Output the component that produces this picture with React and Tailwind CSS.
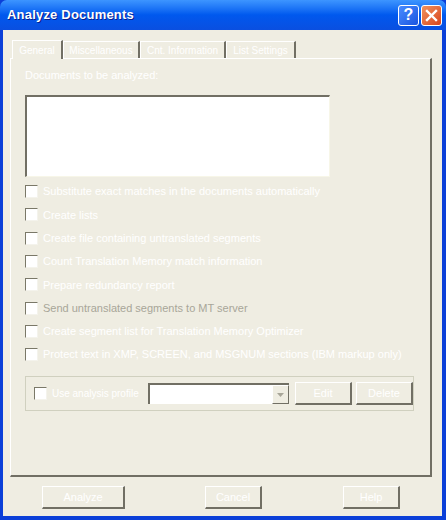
import React from "react";

const OPTIONS = [
  { label: "Substitute exact matches in the documents automatically" },
  { label: "Create lists" },
  { label: "Create file containing untranslated segments" },
  { label: "Count Translation Memory match information" },
  { label: "Prepare redundancy report" },
  { label: "Send untranslated segments to MT server", gray: true },
  { label: "Create segment list for Translation Memory Optimizer" },
  { label: "Protect text in XMP, SCREEN, and MSGNUM sections (IBM markup only)" },
];

const TABS = [
  { label: "General", w: "w-[51px]" },
  { label: "Miscellaneous", w: "w-[77px]" },
  { label: "Cnt. Information", w: "w-[86px]" },
  { label: "List Settings", w: "w-[70px]" },
];

function CheckBox() {
  return (
    <span className="w-[13px] h-[13px] shrink-0 bg-white border-t border-l border-[#7a7868] border-r border-b border-r-[#f4f3ec] border-b-[#f4f3ec]" />
  );
}

function Button({ children, className = "" }) {
  return (
    <div
      className={`h-[23px] flex items-center justify-center text-white border-t border-l border-white border-r-2 border-b-2 border-r-[#716f64] border-b-[#716f64] ${className}`}
    >
      {children}
    </div>
  );
}

export default function App() {
  return (
    <div className="w-[446px] h-[520px] bg-[#0b3fd8] flex flex-col font-['Liberation_Sans',_Arial,_sans-serif] text-[11px] select-none overflow-hidden">
      {/* title bar */}
      <div className="h-[30px] shrink-0 flex items-center px-[7px] bg-gradient-to-b from-[#3d95ff] via-[#0058ee] to-[#0a4fe0] rounded-t-[7px]">
        <span className="text-white font-bold text-[13px] tracking-[0.2px] [text-shadow:1px_1px_0_#0a1e8c]">
          Analyze Documents
        </span>
        <div className="ml-auto flex gap-[2px] mr-[-3px]">
          <div className="w-[21px] h-[21px] rounded-[3px] border border-white bg-gradient-to-br from-[#4a8cff] to-[#1a54e0] flex items-center justify-center text-white font-bold text-[16px] leading-none">
            ?
          </div>
          <div className="w-[21px] h-[21px] rounded-[3px] border border-white bg-gradient-to-br from-[#f0915c] to-[#d8421a] flex items-center justify-center">
            <svg width="13" height="13" viewBox="0 0 13 13">
              <path d="M2 2 L11 11 M11 2 L2 11" stroke="white" strokeWidth="2.4" strokeLinecap="square" />
            </svg>
          </div>
        </div>
      </div>

      {/* client */}
      <div className="flex-1 ml-[3px] mr-[4px] mb-[4px] bg-[#efede2] flex flex-col">
        {/* tabs */}
        <div className="flex pl-[9px] pt-[9px] h-[28px] items-end">
          {TABS.map((t, i) => (
            <div
              key={t.label}
              className={`${t.w} flex items-center justify-center whitespace-nowrap overflow-hidden text-[10px] text-white border-t border-l border-white border-r-2 border-r-[#716f64] ${
                i === 0 ? "h-[19px] mb-[-1px] relative z-10 bg-[#efede2]" : "h-[17px]"
              }`}
            >
              {t.label}
            </div>
          ))}
        </div>

        {/* panel */}
        <div className="ml-[7px] w-[422px] h-[419px] border-t border-l border-white border-r-2 border-b-2 border-r-[#716f64] border-b-[#716f64] pl-[14px] pt-[8px] flex flex-col">
          <div className="h-[14px] text-white">Documents to be analyzed:</div>
          <div className="mt-[14px] w-[305px] h-[82px] bg-white border-t-2 border-l-2 border-[#716f64] border-r border-b border-r-[#f7f6e8] border-b-[#f7f6e8]" />

          <div className="mt-[3px] flex flex-col">
            {OPTIONS.map((o) => (
              <div key={o.label} className="h-[23.3px] flex items-center gap-[5px]">
                <CheckBox />
                <span className={`whitespace-nowrap ${o.gray ? "text-[#a8a699]" : "text-white"}`}>{o.label}</span>
              </div>
            ))}
          </div>

          {/* profile group */}
          <div className="mt-[10px] w-[389px] h-[35px] border border-[#d0d0bf] flex items-center pl-[8px]">
            <CheckBox />
            <span className="ml-[5px] text-white text-[10px] w-[92px] whitespace-nowrap">Use analysis profile</span>
            <div className="ml-[4px] w-[141px] h-[21px] bg-white border-t-2 border-l-2 border-[#716f64] flex justify-end">
              <div className="w-[17px] h-full border-l border-t border-white border-r border-b border-r-[#716f64] border-b-[#716f64] bg-[#efede2] flex items-center justify-center">
                <svg width="7" height="4" viewBox="0 0 7 4">
                  <path d="M0 0 H7 L3.5 4 Z" fill="#a8a699" />
                </svg>
              </div>
            </div>
            <Button className="ml-[6px] w-[57px]">Edit</Button>
            <Button className="ml-[4px] w-[57px]">Delete</Button>
          </div>
        </div>

        {/* bottom buttons */}
        <div className="flex mt-[9px] pl-[39px]">
          <Button className="w-[83px]">Analyze</Button>
          <Button className="ml-[80px] w-[57px]">Cancel</Button>
          <Button className="ml-[81px] w-[57px]">Help</Button>
        </div>
      </div>
    </div>
  );
}
